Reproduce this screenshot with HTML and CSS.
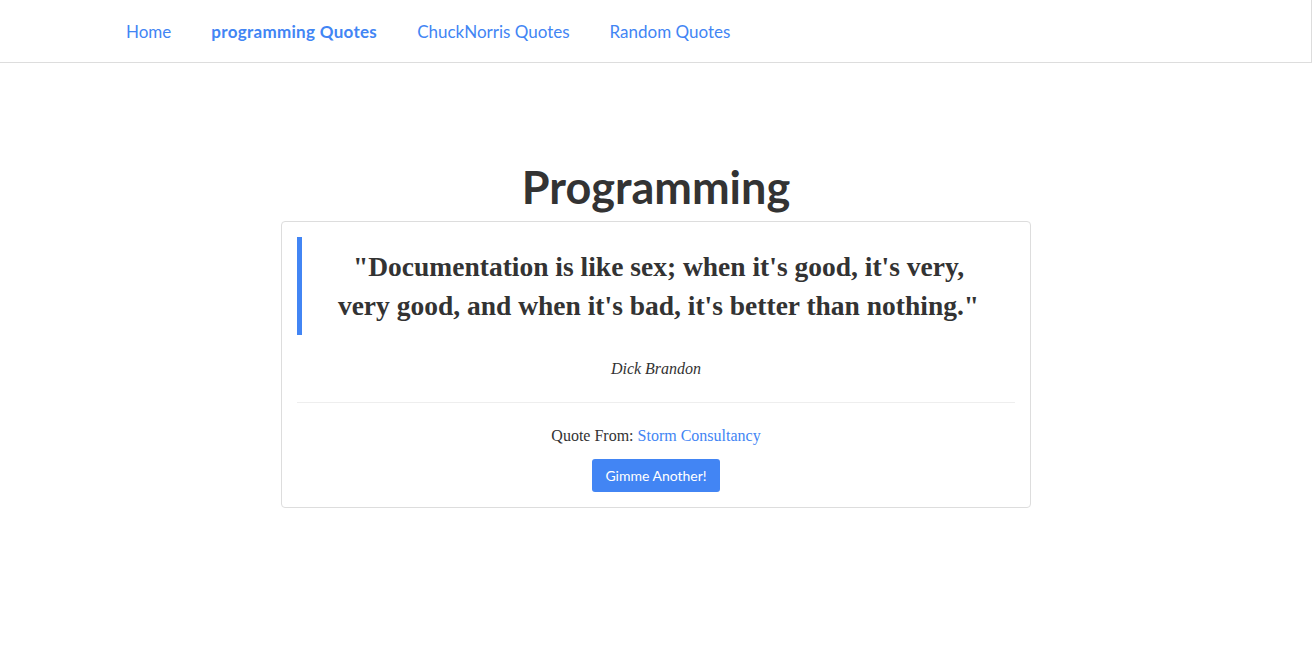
FILE: index.html
```html
<!DOCTYPE html>
<html lang="en">
<head>
<meta charset="utf-8">
<title>Programming Quotes</title>
<link rel="stylesheet" href="styles.css">
</head>
<body>
<nav class="navbar">
  <ul class="nav">
    <li><a href="#" class="nav-link">Home</a></li>
    <li><a href="#" class="nav-link active">programming Quotes</a></li>
    <li><a href="#" class="nav-link">ChuckNorris Quotes</a></li>
    <li><a href="#" class="nav-link">Random Quotes</a></li>
  </ul>
</nav>
<main class="main">
  <h1 class="title">Programming</h1>
  <section class="card">
    <blockquote class="quote">"Documentation is like sex; when it's good, it's very, very good, and when it's bad, it's better than nothing."</blockquote>
    <p class="author">Dick Brandon</p>
    <hr class="divider">
    <p class="source">Quote From: <a href="#" class="source-link">Storm Consultancy</a></p>
    <div class="actions"><button class="btn" type="button">Gimme Another!</button></div>
  </section>
</main>
</body>
</html>
```
FILE: styles.css
```css
* { box-sizing: border-box; }
html, body { margin: 0; padding: 0; background: #fff; }
body { font-family: "Liberation Serif", "Times New Roman", serif; color: #333; }

.navbar {
  height: 63px;
  border-bottom: 1px solid #ddd;
  border-right: 1px solid #ddd;
  padding-left: 106px;
}
.nav {
  list-style: none;
  margin: 0;
  padding: 1px 0 0;
  display: flex;
  height: 62px;
  align-items: center;
}
.nav-link {
  display: block;
  padding: 0 20px;
  font-family: Lato, "Open Sans", sans-serif;
  font-size: 17px;
  color: #4285f4;
  text-decoration: none;
}
.nav-link.active { font-weight: 700; letter-spacing: 0.3px; }

.main {
  width: 750px;
  margin: 0 auto;
  padding-top: 96px;
}
.title {
  margin: 0 0 6px;
  text-align: center;
  font-family: Lato, "Open Sans", sans-serif;
  font-weight: 700;
  font-size: 45px;
  line-height: 56px;
  color: #333;
}
.card {
  border: 1px solid #ddd;
  border-radius: 4px;
  padding: 15px;
  text-align: center;
}
.quote {
  margin: 0 0 21px;
  padding: 10px 30px;
  border-left: 5px solid #4285f4;
  font-weight: 700;
  font-size: 27.5px;
  line-height: 39px;
}
.author {
  margin: 0;
  font-style: italic;
  font-size: 16px;
  line-height: 26px;
}
.divider {
  margin: 20px 0;
  border: 0;
  border-top: 1px solid #eee;
}
.source {
  margin: 0 0 10px;
  font-size: 16px;
  line-height: 26px;
}
.source-link { color: #4285f4; text-decoration: none; }
.actions { display: flex; justify-content: center; }
.btn {
  height: 33px;
  padding: 0 13px;
  border: 0;
  border-radius: 3px;
  background: #4285f4;
  color: #fff;
  font-family: Lato, "Open Sans", sans-serif;
  font-size: 14px;
}
```
